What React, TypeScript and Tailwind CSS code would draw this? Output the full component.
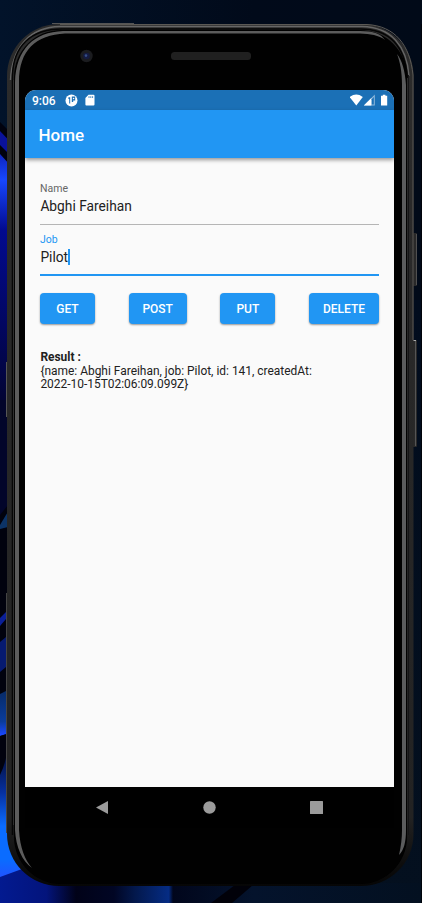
import React from "react";

function Wallpaper() {
  return (
    <svg className="absolute inset-0" width="422" height="903" viewBox="0 0 422 903">
      <defs>
        <linearGradient id="sky" x1="0" y1="0" x2="1" y2="0">
          <stop offset="0" stopColor="#02132a" />
          <stop offset="0.6" stopColor="#010a1a" />
          <stop offset="1" stopColor="#010a18" />
        </linearGradient>
        <linearGradient id="side" x1="0" y1="0" x2="0" y2="1">
          <stop offset="0" stopColor="#010c1d" />
          <stop offset="1" stopColor="#04101f" />
        </linearGradient>
        <linearGradient id="petalA" x1="0" y1="150" x2="0" y2="400" gradientUnits="userSpaceOnUse">
          <stop offset="0" stopColor="#0c1fb4" />
          <stop offset="0.12" stopColor="#1747ff" />
          <stop offset="0.32" stopColor="#020a90" />
          <stop offset="0.7" stopColor="#020660" />
          <stop offset="1" stopColor="#020434" />
        </linearGradient>
        <linearGradient id="ray" x1="0" y1="690" x2="0" y2="735" gradientUnits="userSpaceOnUse">
          <stop offset="0" stopColor="#072a66" />
          <stop offset="0.7" stopColor="#0a3c9c" />
          <stop offset="1" stopColor="#1a48ff" />
        </linearGradient>
        <linearGradient id="petalB" x1="0" y1="745" x2="0" y2="880" gradientUnits="userSpaceOnUse">
          <stop offset="0" stopColor="#020520" />
          <stop offset="0.35" stopColor="#0630a0" />
          <stop offset="0.6" stopColor="#0a6cff" />
          <stop offset="0.85" stopColor="#0a6cff" />
          <stop offset="1" stopColor="#2450ff" />
        </linearGradient>
        <linearGradient id="floor" x1="0" y1="0" x2="1" y2="0">
          <stop offset="0" stopColor="#031a90" />
          <stop offset="0.11" stopColor="#03147c" />
          <stop offset="0.18" stopColor="#010218" />
          <stop offset="0.27" stopColor="#010624" />
          <stop offset="0.32" stopColor="#03184c" />
          <stop offset="0.4" stopColor="#052c84" />
          <stop offset="0.41" stopColor="#01061c" />
          <stop offset="0.6" stopColor="#04132c" />
          <stop offset="1" stopColor="#031020" />
        </linearGradient>
      </defs>
      <rect width="422" height="903" fill="url(#sky)" />
      <rect x="380" y="300" width="42" height="603" fill="url(#side)" />
      <path d="M0 122L20 142V700H0Z" fill="#01020e" />
      <path d="M0 131L20 152V165L0 145Z" fill="#0a129c" />
      <path d="M0 154L20 176V400H0Z" fill="url(#petalA)" />
      <path d="M0 400H20V490L0 515Z" fill="#02052a" />
      <path d="M0 525L12 505V526L0 529Z" fill="#0c3366" />
      <path d="M0 618L12 606V612L0 626Z" fill="#0a1f98" />
      <path d="M0 642L12 632V662L0 672Z" fill="#061a70" />
      <path d="M0 694L20 684V730L0 736Z" fill="url(#ray)" />
      <path d="M0 736L10 733V780H0Z" fill="#01020e" />
      <path d="M0 775C5 765 7 755 8 745L40 880L0 880Z" fill="url(#petalB)" />
      <path d="M0 877L22 869L60 883H422V903H0Z" fill="url(#floor)" />
      <path d="M211 903L235 885H253L232 903Z" fill="#010109" />
      <path d="M421.5 24V903" stroke="#00040a" />
    </svg>
  );
}

function PhoneFrame() {
  return (
    <svg className="absolute inset-0" width="422" height="903" viewBox="0 0 422 903" fill="none">
      <defs>
        <linearGradient id="shell" x1="0" y1="24" x2="0" y2="886" gradientUnits="userSpaceOnUse">
          <stop offset="0" stopColor="#2c2c2c" />
          <stop offset="0.92" stopColor="#232323" />
          <stop offset="0.98" stopColor="#0b0b0b" />
          <stop offset="1" stopColor="#060606" />
        </linearGradient>
      </defs>
      <path d="M52 23.5H134" stroke="#555" />
      <rect x="6" y="362" width="2" height="55" fill="#555" />
      <rect x="6" y="593" width="2" height="240" fill="#444" />
      <rect x="412" y="233" width="5" height="53" rx="1" fill="#292929" />
      <path d="M416.5 234V285" stroke="#505050" />
      <rect x="412" y="340" width="5" height="107" rx="1" fill="#292929" />
      <path d="M415.5 341V446" stroke="#555" />
      <path d="M413 340.5h3" stroke="#aaa" />
      <rect x="7" y="24" width="406.5" height="862" rx="52" fill="url(#shell)" />
      <path d="M60 24.5H367C395 26 410 45 413 75V340" stroke="#5b5955" />
      <path d="M10.5 80C12 46 31 27 60 26.5H362C391 27 407 46 409 76" stroke="#666" strokeWidth="1.4" />
      <path d="M12.5 835V76C13 46 31 29 62 29H360C389 29 405 46 407.5 78" stroke="#050505" strokeWidth="1.5" />
      <rect x="14" y="30" width="393" height="854" rx="47" fill="#010101" />
      <path d="M13.5 825V80" stroke="#303030" />
      <path d="M15 830V82C16 49 34 32 63 31H360C374 31 381 34 385 40C379 35 370 34 360 33.5H65C36 35 19 50 19 82V830C20 848 25 860 32 868C22 861 16 847 15 830" fill="#5c5c5c" />
      <path d="M397 54C402 60 405 71 406 85V830C406 842 404 850 399 855C401 846 402 838 402 830V85C402 71 400 62 397 54Z" fill="#5b5c5d" />
      <path d="M408.5 75V835" stroke="#151517" />
      <circle cx="86.5" cy="56" r="6.2" fill="#1b1c1f" />
      <circle cx="86.5" cy="56" r="3.3" fill="#151b40" />
      <circle cx="86" cy="55.6" r="1.3" fill="#344d88" />
      <rect x="171" y="52" width="80" height="8" rx="3.5" fill="#202020" />
    </svg>
  );
}

function StatusBar() {
  return (
    <div className="flex h-5 items-center bg-[#1b70b6] pl-[7px] pr-[6px] text-white">
      <span className="w-6 whitespace-nowrap pt-px text-[12px] font-medium leading-5">9:06</span>
      <svg className="ml-[8.5px]" width="13" height="13" viewBox="0 0 13 13">
        <circle cx="6.5" cy="6.5" r="6" fill="#fff" />
        <path d="M3.4 3.2H5.2V9.6H4.2V5H3.4Z" fill="#1b70b6" />
        <path d="M6.8 2.6H10.2V6.4H8.2V8H6.8Z" fill="#1b70b6" />
        <circle cx="8.6" cy="4.5" r=".8" fill="#fff" />
      </svg>
      <svg className="ml-[7px]" width="10" height="12" viewBox="0 0 10 12">
        <path d="M3.5 .8H8.5Q9.5 .8 9.5 1.8V10.6Q9.5 11.5 8.5 11.5H1.3Q.4 11.5.4 10.6V4Z" fill="#fff" />
        <path d="M4 2.2V4M5.8 2.2V4M7.6 2.2V4" stroke="#1b70b6" strokeWidth=".8" />
      </svg>
      <svg className="ml-auto" width="38" height="12" viewBox="0 0 38 12">
        <path d="M-.3 3Q6.2-1.8 12.8 3L6.3 11.4Z" fill="#fff" />
        <path d="M13.8 11.5L24.8 .6V11.5Z" fill="#8db7da" />
        <path d="M13.8 11.5L21.4 4V11.5Z" fill="#fff" />
        <path d="M21.8 5.2V10.6H23.8V3Z" fill="#1b70b6" />
        <path d="M31 1.8H32.8V.7H35.4V1.8H37.2V11.5H31Z" fill="#fff" />
      </svg>
    </div>
  );
}

function Field({ label, value, focused }: { label: string; value: string; focused?: boolean }) {
  return (
    <label className="flex flex-col">
      <span className={focused ? "text-[10.5px] leading-[12px] text-[#2196f3]" : "text-[10.5px] leading-[12px] text-[#666]"}>{label}</span>
      <span className="mt-[3px] flex h-4 items-center pl-[0.4px] text-[13.75px] leading-4 text-[#212121]">
        {value}
        {focused && <span className="h-4 w-[2px] bg-[#2196f3]" />}
      </span>
      <span className={focused ? "mt-[9px] h-[2px] bg-[#2196f3]" : "mt-[10px] h-px bg-[#b5b5b5]"} />
    </label>
  );
}

function ActionButton({ text, width }: { text: string; width: string }) {
  return (
    <button className={`${width} h-[31px] rounded-[4px] bg-[#2196f3] text-center text-[12px] font-medium leading-[32px] text-white shadow-[0_1px_2px_rgba(0,0,0,0.4)]`}>
      {text}
    </button>
  );
}

export default function App() {
  return (
    <div className="relative h-[903px] w-[422px] overflow-hidden bg-[#010a18] pl-[25px] pt-[90px] font-['Roboto',sans-serif]">
      <Wallpaper />
      <PhoneFrame />
      <div className="relative flex h-[738px] w-[369px] flex-col overflow-hidden rounded-t-[11px] bg-[#fafafa]">
        <StatusBar />
        <header className="relative flex h-12 shrink-0 items-center bg-[#2196f3] pl-[13.5px] pt-px shadow-[0_2px_4px_rgba(0,0,0,0.4)]">
          <h1 className="text-[17px] font-medium leading-6 text-white">Home</h1>
        </header>
        <main className="flex flex-1 flex-col px-[15px] pt-[25px]">
          <Field label="Name" value="Abghi Fareihan" />
          <div className="h-[9px]" />
          <Field label="Job" value="Pilot" focused />
          <div className="mt-[17px] flex justify-between">
            <ActionButton text="GET" width="w-[55px]" />
            <ActionButton text="POST" width="w-[58px]" />
            <ActionButton text="PUT" width="w-[55px]" />
            <ActionButton text="DELETE" width="w-[70px]" />
          </div>
          <div className="mt-[27px] pl-[0.4px] text-[11.95px] leading-[13.7px] text-[#212121]">
            <p className="font-bold">Result :</p>
            <p className="whitespace-nowrap">
              {"{name: Abghi Fareihan, job: Pilot, id: 141, createdAt:"}
              <br />
              {"2022-10-15T02:06:09.099Z}"}
            </p>
          </div>
        </main>
        <nav className="flex h-[41px] shrink-0 items-center bg-black">
          <svg width="369" height="41" viewBox="0 0 369 41" fill="#9b9b9b">
            <path d="M71 20.5L83 14V27Z" />
            <circle cx="184.5" cy="20.5" r="6.2" />
            <rect x="285" y="14" width="13" height="13" rx=".5" />
          </svg>
        </nav>
      </div>
    </div>
  );
}
